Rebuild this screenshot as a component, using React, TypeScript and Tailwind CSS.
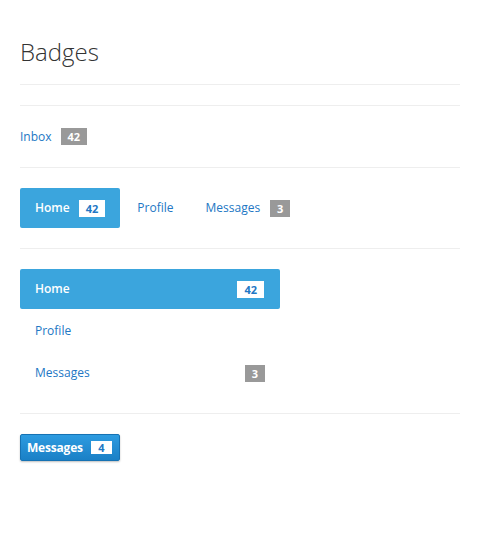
const Rule = () => <div className="h-px bg-[#eeeeee]" />

const Badge = ({ n, light }: { n: string; light?: boolean }) => (
  <span
    className={
      light
        ? 'inline-flex h-[17px] min-w-[20px] items-center justify-center bg-white px-[7px] text-[11px] font-bold leading-none text-[#2277c4]'
        : 'inline-flex h-[17px] min-w-[20px] items-center justify-center bg-[#999999] px-[7px] text-[11px] font-bold leading-none text-white'
    }
  >
    {n}
  </span>
)

const App = () => {
  return (
    <div className="min-h-[560px] bg-white px-5 pt-[35px] text-[12px] text-[#333333] font-['Open_Sans',sans-serif]">
      {/* heading */}
      <h1 className="text-[24px] font-light leading-[34px]">Badges</h1>
      <div className="mt-[15px]">
        <Rule />
      </div>
      <div className="mt-5">
        <Rule />
      </div>

      {/* simple link with badge */}
      <div className="flex h-[61px] items-center gap-[9px]">
        <a className="text-[#2277c4]">Inbox</a>
        <Badge n="42" />
      </div>
      <Rule />

      {/* horizontal pills */}
      <div className="flex gap-[2px] pt-5 pb-5">
        <a className="flex h-10 items-center gap-[9px] rounded-[2px] bg-[#3ba5dd] pl-[15px] pr-[15px] font-semibold text-white">
          Home <Badge n="42" light />
        </a>
        <a className="flex h-10 items-center px-[15px] text-[#2277c4]">Profile</a>
        <a className="flex h-10 items-center gap-[10px] px-[15px] text-[#2277c4]">
          Messages <Badge n="3" />
        </a>
      </div>
      <Rule />

      {/* stacked pills */}
      <div className="flex w-[260px] flex-col gap-[2px] pt-5 pb-5">
        <a className="flex h-10 items-center justify-between rounded-[2px] bg-[#3ba5dd] pl-[15px] pr-[16px] font-semibold text-white">
          Home <Badge n="42" light />
        </a>
        <a className="flex h-10 items-center px-[15px] text-[#2277c4]">Profile</a>
        <a className="flex h-10 items-center justify-between pl-[15px] pr-[15px] text-[#2277c4]">
          Messages <Badge n="3" />
        </a>
      </div>
      <Rule />

      {/* button with badge */}
      <div className="pt-5">
        <button className="flex h-[27px] items-center gap-[8px] rounded-[2px] border border-[#1672b3] bg-gradient-to-b from-[#2d9be0] to-[#1a80c6] pl-[6px] pr-[7px] text-[12px] font-bold tracking-[-0.2px] text-white shadow-[0_1px_2px_rgba(0,0,0,0.25)]">
          Messages
          <span className="inline-flex h-[13px] min-w-[21px] items-center justify-center bg-white px-[6px] text-[11px] font-bold leading-none tracking-normal text-[#2277c4]">
            4
          </span>
        </button>
      </div>
    </div>
  )
}

export default App
